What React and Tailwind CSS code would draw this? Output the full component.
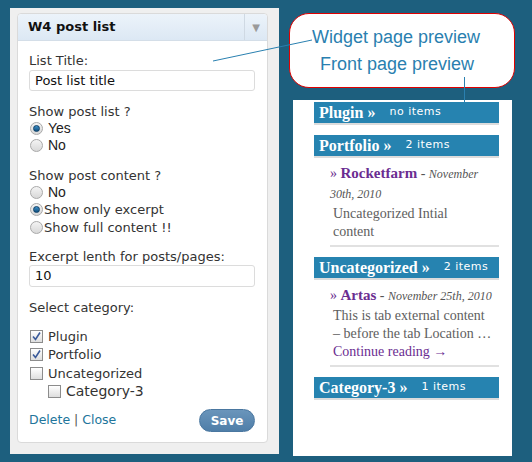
import React from 'react';

const sans = { fontFamily: '"DejaVu Sans", Verdana, sans-serif' };

const Radio = ({ checked }) => (
  <span className="inline-block w-[13px] h-[13px] rounded-full border border-[#a9a9a9] bg-gradient-to-b from-[#f4f4f4] to-[#d8d8d8] relative shrink-0">
    {checked && (
      <span className="absolute left-[2px] top-[2px] w-[7px] h-[7px] rounded-full bg-gradient-to-b from-[#3d8fc7] to-[#10507f] border border-[#0d3e66]" />
    )}
  </span>
);

const Check = ({ checked }) => (
  <span className="inline-flex items-center justify-center w-[13px] h-[13px] border border-[#8c8c8c] bg-gradient-to-b from-[#ffffff] to-[#dedede] shrink-0">
    {checked && (
      <svg width="9" height="9" viewBox="0 0 9 9">
        <path d="M1 4.5 L3.5 7.5 L8 0.5" fill="none" stroke="#3a5a9a" strokeWidth="1.6" />
      </svg>
    )}
  </span>
);

const Bar = ({ title, count }) => (
  <div className="h-[23px] bg-[#2683b0] border-b-2 border-[#dcdcdc] flex items-center pl-[5px]">
    <span className="text-white font-bold text-[16px] font-['Liberation_Serif',serif]">{title} »</span>
    <span className="text-white text-[11px] ml-[14px] tracking-[0.5px]" style={sans}>{count}</span>
  </div>
);

const Entry = ({ name, date, lines, more }) => (
  <div className="ml-[16px] pt-[5px] pb-[4px] border-b-2 border-[#e1e1e1] font-['Liberation_Serif',serif]">
    <div className="leading-[20px] text-[14px]">
      <span className="text-[#6b2d91]">» </span>
      <span className="text-[#6b2d91] font-bold text-[15px]">{name}</span>
      <span className="text-[#555]"> - </span>
      <span className="italic text-[#555] text-[12px]">{date}</span>
    </div>
    <div className="ml-[3px] mt-[1px] text-[14px] leading-[18px] text-[#5e5e5e]">
      {lines.map((l) => (
        <div key={l} className="whitespace-nowrap">{l}</div>
      ))}
      {more && <div className="text-[#6b2d91]">Continue reading →</div>}
    </div>
  </div>
);

export default function App() {
  return (
    <div className="w-[532px] h-[462px] bg-[#1d5f7e] flex relative overflow-hidden">
      <div className="ml-[10px] mt-[8px] w-[269px] h-[446px] bg-[#efefef] pt-[5px] pl-[7px]">
        <div className="w-[251px] h-[430px] bg-white border border-[#dadada] rounded-[4px] text-[13px] text-[#333]" style={sans}>
          <div className="h-[27px] flex bg-gradient-to-b from-[#ecf3fa] to-[#dce8f4] border-b border-[#d4dee8] rounded-t-[4px]">
            <div className="flex-1 pl-[10px] flex items-center font-bold text-[#111] text-[13px]">W4 post list</div>
            <div className="w-[23px] border-l border-[#cfd9e3] flex items-center justify-center">
              <span className="text-[#9a9a9a] text-[10px]">▼</span>
            </div>
          </div>
          <div className="px-[11px] pt-[11px]">
            <div className="leading-[17px]">List Title:</div>
            <div className="w-[226px] h-[21px] border border-[#dcdcdc] rounded-[3px] flex items-center pl-[5px] text-[#111] mt-[1px]">Post list title</div>

            <div className="leading-[17px] mt-[12px]">Show post list ?</div>
            <div className="flex items-center h-[17px] pl-[1px] gap-[5px] font-['Liberation_Sans',sans-serif] text-[14px] text-[#222]"><Radio checked /><span>Yes</span></div>
            <div className="flex items-center h-[17px] pl-[1px] gap-[5px] font-['Liberation_Sans',sans-serif] text-[14px] text-[#222]"><Radio /><span>No</span></div>

            <div className="leading-[17px] mt-[13px]">Show post content ?</div>
            <div className="flex items-center h-[17px] pl-[1px] gap-[5px] font-['Liberation_Sans',sans-serif] text-[14px] text-[#222]"><Radio /><span>No</span></div>
            <div className="flex items-center h-[17.5px] pl-[1px] gap-[1px]"><Radio checked /><span>Show only excerpt</span></div>
            <div className="flex items-center h-[17.5px] pl-[1px] gap-[1px]"><Radio /><span>Show full content !!</span></div>

            <div className="leading-[17px] mt-[12px]">Excerpt lenth for posts/pages:</div>
            <div className="w-[226px] h-[22px] border border-[#dcdcdc] rounded-[3px] flex items-center pl-[5px] text-[#111]">10</div>

            <div className="leading-[17px] mt-[12px]">Select category:</div>
            <div className="mt-[11px]">
              <div className="flex items-center h-[18.5px] pl-[1px] gap-[5px]"><Check checked /><span>Plugin</span></div>
              <div className="flex items-center h-[18.5px] pl-[1px] gap-[5px]"><Check checked /><span>Portfolio</span></div>
              <div className="flex items-center h-[18.5px] pl-[1px] gap-[5px]"><Check /><span>Uncategorized</span></div>
              <div className="flex items-center h-[18.5px] pl-[19px] gap-[5px] text-[14px]"><Check /><span>Category-3</span></div>
            </div>

            <div className="flex items-center justify-between mt-[8px] pr-[1px]">
              <div className="text-[12.5px] text-[#21759b]">
                Delete <span className="text-[#555]">|</span> Close
              </div>
              <div className="w-[56px] h-[23px] rounded-full bg-gradient-to-b from-[#6a95bb] to-[#4f7ea8] text-white font-bold text-[12px] flex items-center justify-center border border-[#4a77a0]">Save</div>
            </div>
          </div>
        </div>
      </div>

      <div className="ml-[10px] flex flex-col">
        <div className="mt-[13px] w-[226px] h-[75px] bg-white border border-[#e00000] rounded-[20px] flex flex-col items-center justify-center pr-[12px] text-[#2a7fb0] text-[18px] leading-[27px] font-['Liberation_Sans',Arial,sans-serif]">
          <div>Widget page preview</div>
          <div className="pl-[2px]">Front page preview</div>
        </div>
        <div className="ml-[4px] mt-[12px] w-[219px] h-[356px] bg-white pl-[21px] pt-[2px]">
          <div className="w-[185px]">
            <Bar title="Plugin" count="no items" />
            <div className="h-[10px]" />
            <Bar title="Portfolio" count="2 items" />
            <Entry name="Rocketfarm" date="November 30th, 2010" lines={['Uncategorized Intial', 'content']} />
            <div className="h-[10px]" />
            <Bar title="Uncategorized" count="2 items" />
            <Entry
              name="Artas"
              date="November 25th, 2010"
              lines={['This is tab external content', '– before the tab Location …']}
              more
            />
            <div className="h-[10px]" />
            <Bar title="Category-3" count="1 items" />
          </div>
        </div>
      </div>

      <svg className="absolute left-0 top-0 pointer-events-none" width="532" height="462">
        <line x1="213" y1="61" x2="312" y2="40" stroke="#2a80b0" strokeWidth="1" />
        <line x1="464.5" y1="77" x2="464.5" y2="102" stroke="#2a80b0" strokeWidth="1" />
      </svg>
    </div>
  );
}
